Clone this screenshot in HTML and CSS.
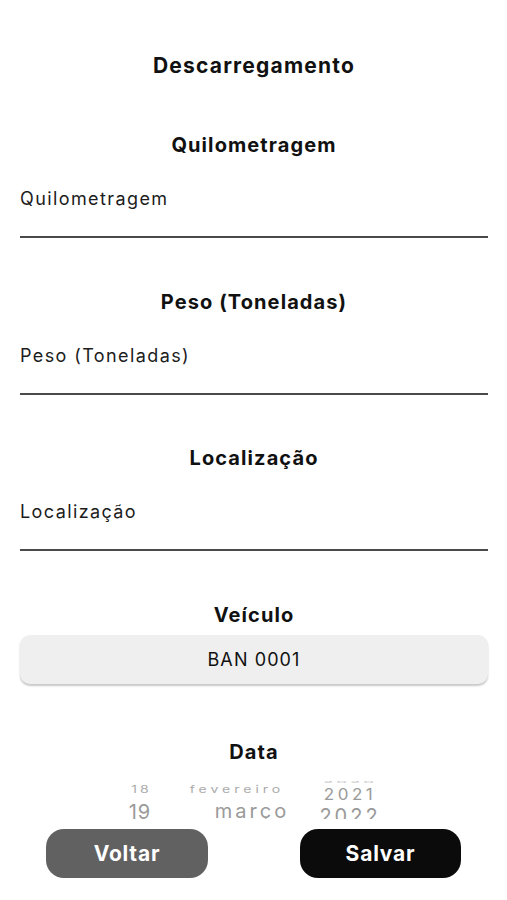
FILE: index.html
```html
<!DOCTYPE html>
<html lang="pt">
<head>
<meta charset="utf-8">
<title>Descarregamento</title>
<link rel="stylesheet" href="styles.css">
</head>
<body>
<div class="screen">
  <h1 class="title">Descarregamento</h1>

  <section class="section">
    <h2 class="heading">Quilometragem</h2>
    <div class="field"><span class="placeholder">Quilometragem</span></div>
  </section>

  <section class="section">
    <h2 class="heading">Peso (Toneladas)</h2>
    <div class="field"><span class="placeholder">Peso (Toneladas)</span></div>
  </section>

  <section class="section">
    <h2 class="heading">Localização</h2>
    <div class="field"><span class="placeholder">Localização</span></div>
  </section>

  <section class="section">
    <h2 class="heading">Veículo</h2>
    <div class="select">BAN 0001</div>
  </section>

  <section class="section-date">
    <h2 class="heading">Data</h2>
    <div class="picker">
      <div class="col col-day">
        <span class="row d1">18</span>
        <span class="row d2">19</span>
      </div>
      <div class="col col-month">
        <span class="row m1">fevereiro</span>
        <span class="row m2">março</span>
      </div>
      <div class="col col-year">
        <span class="row y0">2020</span>
        <span class="row y1">2021</span>
        <span class="row y2">2022</span>
      </div>
    </div>
  </section>

  <div class="actions">
    <button class="btn btn-back">Voltar</button>
    <button class="btn btn-save">Salvar</button>
  </div>
</div>
</body>
</html>
```

FILE: styles.css
```css
* { box-sizing: border-box; }
html, body { margin: 0; padding: 0; background: #fff; }
body {
  font-family: Inter, "Liberation Sans", sans-serif;
  color: #111;
  width: 507px;
  height: 900px;
  overflow: hidden;
}
.screen {
  padding: 54px 19px 0 20px;
}
.title {
  margin: 0;
  font-size: 21px;
  line-height: 24px;
  font-weight: 700;
  letter-spacing: 1.2px;
  text-align: center;
}
.section { margin-top: 55px; }
.section + .section { margin-top: 51.5px; }
.heading {
  margin: 0;
  font-size: 20px;
  line-height: 24px;
  font-weight: 700;
  letter-spacing: 1.1px;
  text-align: center;
}
.field {
  margin-top: 31px;
  padding-bottom: 26px;
  border-bottom: 2px solid #4a4a4a;
}
.placeholder {
  display: block;
  font-size: 18px;
  line-height: 22px;
  color: #1c1c1c;
  letter-spacing: 1.4px;
}
.select {
  margin-top: 8px;
  height: 49px;
  border-radius: 10px;
  background: #efefef;
  box-shadow: 0 2px 2px rgba(0,0,0,0.22);
  display: flex;
  align-items: center;
  justify-content: center;
  font-size: 18px;
  color: #111;
  letter-spacing: 1.1px;
}
.section-date { margin-top: 56px; }
.picker {
  height: 43px;
  margin-top: 12px;
  overflow: hidden;
  display: flex;
  padding-left: 100px;
  color: #999;
}
.col {
  display: flex;
  flex-direction: column;
  align-items: center;
}
.row { display: block; white-space: nowrap; }
.col-day { width: 40px; }
.col-month { width: 130px; margin-left: 15px; }
.col-year { width: 70px; margin-left: 10px; }

.d1, .m1 {
  font-size: 14px;
  line-height: 10px;
  height: 10px;
  margin-top: 8px;
  transform: scaleY(0.75);
  color: #ababab;
}
.d1 { letter-spacing: 3px; padding-left: 3px; }
.m1 { letter-spacing: 4px; margin-left: -6px; }
.d2, .m2 {
  font-size: 20px;
  line-height: 24px;
  margin-top: 6px;
  color: #9a9a9a;
}
.d2 { letter-spacing: 1px; }
.m2 { letter-spacing: 3px; margin-left: 24px; margin-top: 5px; }
.y0 {
  font-size: 17px;
  line-height: 17px;
  height: 17px;
  margin-top: -2px;
  letter-spacing: 3px;
  transform: scaleY(0.15);
  color: #bbb;
}
.y1 {
  font-size: 17px;
  line-height: 14px;
  height: 14px;
  margin-top: -3px;
  letter-spacing: 3.5px;
  transform: scaleY(0.9);
  color: #9a9a9a;
}
.y2 {
  font-size: 20px;
  line-height: 24px;
  margin-top: 2px;
  letter-spacing: 3px;
  color: #9a9a9a;
}
.actions {
  display: flex;
  justify-content: space-between;
  padding: 0 27px 0 26px;
  margin-top: 10px;
}
.btn {
  width: 162px;
  height: 49px;
  border: none;
  border-radius: 18px;
  font-family: Inter, "Liberation Sans", sans-serif;
  font-size: 21px;
  font-weight: 700;
  letter-spacing: 0.8px;
  color: #fff;
  display: flex;
  align-items: center;
  justify-content: center;
  padding: 0;
}
.btn-back { background: #616161; }
.btn-save { background: #0b0b0b; width: 161px; }
```
